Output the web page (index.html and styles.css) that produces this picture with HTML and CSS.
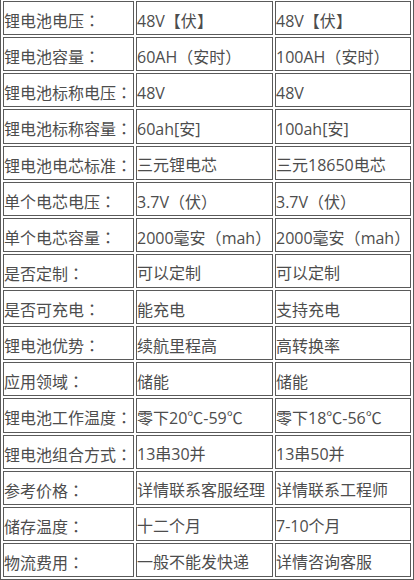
FILE: index.html
```html
<!DOCTYPE html>
<html lang="zh-CN">
<head>
<meta charset="utf-8">
<title>锂电池参数</title>
<link rel="stylesheet" href="styles.css">
</head>
<body>
<table class="spec">
  <colgroup>
    <col class="c1"><col class="c2"><col class="c3">
  </colgroup>
  <tbody>
    <tr><td>锂电池电压<span class="p" lang="zh-TW">：</span></td><td>48V<span class="p" lang="zh-TW">【</span>伏<span class="p" lang="zh-TW">】</span></td><td>48V<span class="p" lang="zh-TW">【</span>伏<span class="p" lang="zh-TW">】</span></td></tr>
    <tr><td>锂电池容量<span class="p" lang="zh-TW">：</span></td><td>60AH<span class="p" lang="zh-TW">（</span>安时<span class="p" lang="zh-TW">）</span></td><td>100AH<span class="p" lang="zh-TW">（</span>安时<span class="p" lang="zh-TW">）</span></td></tr>
    <tr><td>锂电池标称电压<span class="p" lang="zh-TW">：</span></td><td>48V</td><td>48V</td></tr>
    <tr><td>锂电池标称容量<span class="p" lang="zh-TW">：</span></td><td>60ah[安]</td><td>100ah[安]</td></tr>
    <tr><td>锂电池电芯标准<span class="p" lang="zh-TW">：</span></td><td>三元锂电芯</td><td>三元18650电芯</td></tr>
    <tr><td>单个电芯电压<span class="p" lang="zh-TW">：</span></td><td>3.7V<span class="p" lang="zh-TW">（</span>伏<span class="p" lang="zh-TW">）</span></td><td>3.7V<span class="p" lang="zh-TW">（</span>伏<span class="p" lang="zh-TW">）</span></td></tr>
    <tr><td>单个电芯容量<span class="p" lang="zh-TW">：</span></td><td>2000毫安<span class="p" lang="zh-TW">（</span>mah<span class="p" lang="zh-TW">）</span></td><td>2000毫安<span class="p" lang="zh-TW">（</span>mah<span class="p" lang="zh-TW">）</span></td></tr>
    <tr><td>是否定制<span class="p" lang="zh-TW">：</span></td><td>可以定制</td><td>可以定制</td></tr>
    <tr><td>是否可充电<span class="p" lang="zh-TW">：</span></td><td>能充电</td><td>支持充电</td></tr>
    <tr><td>锂电池优势<span class="p" lang="zh-TW">：</span></td><td>续航里程高</td><td>高转换率</td></tr>
    <tr><td>应用领域<span class="p" lang="zh-TW">：</span></td><td>储能</td><td>储能</td></tr>
    <tr><td>锂电池工作温度<span class="p" lang="zh-TW">：</span></td><td>零下20℃-59℃</td><td>零下18℃-56℃</td></tr>
    <tr><td>锂电池组合方式<span class="p" lang="zh-TW">：</span></td><td>13串30并</td><td>13串50并</td></tr>
    <tr><td>参考价格<span class="p" lang="zh-TW">：</span></td><td>详情联系客服经理</td><td>详情联系工程师</td></tr>
    <tr><td>储存温度<span class="p" lang="zh-TW">：</span></td><td>十二个月</td><td>7-10个月</td></tr>
    <tr><td>物流费用<span class="p" lang="zh-TW">：</span></td><td>一般不能发快递</td><td>详情咨询客服</td></tr>
  </tbody>
</table>
</body>
</html>
```

FILE: styles.css
```css
html, body {
  margin: 0;
  padding: 0;
  background: #ffffff;
}

body {
  font-family: "Open Sans", "Noto Sans CJK SC", sans-serif;
  font-size: 16px;
  color: #4d4d4d;
  overflow: hidden;
}

.spec {
  margin-top: -2px;
  width: 414px;
  table-layout: fixed;
  border-collapse: separate;
  border-spacing: 2px;
  border: 1px solid #5a5a5a;
}

.c1 { width: 131px; }
.c2 { width: 137px; }
.c3 { width: 136px; }

.spec td {
  box-sizing: border-box;
  height: 34.125px;
  padding: 5px 0 0 0;
  border: 1px solid #5a5a5a;
  line-height: 22px;
  vertical-align: middle;
  white-space: nowrap;
  overflow: hidden;
}

.p {
  font-family: "Noto Sans CJK TC", "Noto Sans CJK SC", sans-serif;
}
```
